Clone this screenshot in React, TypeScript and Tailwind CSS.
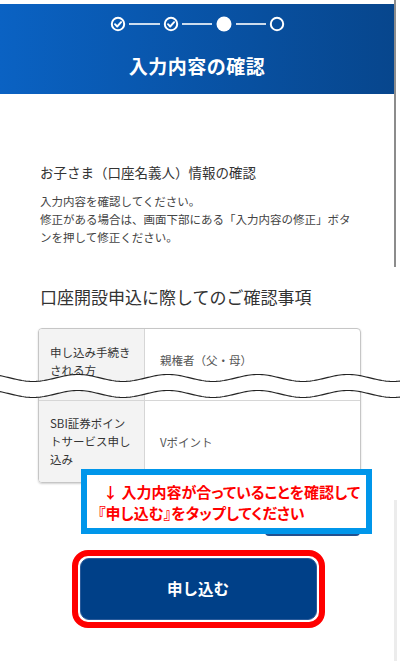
import React from "react"

const jp = "font-['Noto_Sans_CJK_JP','Noto_Sans',sans-serif]"

function CheckStep({ cx }: { cx: number }) {
  return (
    <g>
      <circle cx={cx} cy={10} r={6.2} fill="none" stroke="white" strokeWidth={2} />
      <path d={`M${cx - 3} ${10.2} l2.2 2.3 l3.9 -4.4`} fill="none" stroke="white" strokeWidth={1.9} strokeLinecap="round" strokeLinejoin="round" />
    </g>
  )
}

function Steps() {
  // centres of the four steps, 53px apart
  const xs = [8, 61, 114, 167]
  return (
    <svg width="175" height="20" viewBox="0 0 175 20">
      <CheckStep cx={xs[0]} />
      <CheckStep cx={xs[1]} />
      <circle cx={xs[2]} cy={10} r={7.5} fill="white" />
      <circle cx={xs[3]} cy={10} r={6.2} fill="none" stroke="white" strokeWidth={2} />
      <line x1={19} y1={10} x2={50} y2={10} stroke="white" strokeWidth={1.6} />
      <line x1={72} y1={10} x2={102} y2={10} stroke="white" strokeWidth={1.6} />
      <line x1={126} y1={10} x2={156} y2={10} stroke="white" strokeWidth={1.6} />
    </svg>
  )
}

function wave(c: number, width: number) {
  const pts: string[] = []
  for (let x = 0; x <= width; x += 2) {
    const y = c + 3.5 * Math.cos((2 * Math.PI * (x - 33)) / 90)
    pts.push(`${x},${y.toFixed(2)}`)
  }
  return pts
}

function WaveBreak() {
  const w = 400
  const top = wave(8, w)
  const bottom = wave(24, w).reverse()
  return (
    <svg className="absolute left-0 top-[42px]" width={w} height="34" viewBox={`0 0 ${w} 34`}>
      <polygon points={[...top, ...bottom].join(" ")} fill="white" />
      <polyline points={top.join(" ")} fill="none" stroke="#222" strokeWidth={1.1} />
      <polyline points={wave(24, w).join(" ")} fill="none" stroke="#222" strokeWidth={1.1} />
    </svg>
  )
}

export default function App() {
  return (
    <div className={`relative min-h-[661px] w-[400px] bg-white ${jp}`}>
      <div className="absolute left-[394px] top-0 h-[267px] w-[2px] bg-[#8c8c8c]" />
      <div className="absolute left-[394px] top-[500px] h-[161px] w-[3px] bg-[#ececec]" />

      <div className="w-[396px]">
        <div className="h-[4px] bg-white" />
        <header className="flex h-[90px] w-[395px] flex-col items-center border-r border-[#1a2a44] bg-linear-to-r from-[#0a62c3] to-[#07468d]">
          <div className="mt-[10px]">
            <Steps />
          </div>
          <h1 className="mt-[19px] text-[19px] font-bold leading-[26px] tracking-[0.5px] text-white">入力内容の確認</h1>
        </header>

        <div className="pl-[40px] pr-[35px]">
          <h2 className="mt-[68px] text-[13.5px] leading-[20px] text-[#333]">お子さま（口座名義人）情報の確認</h2>
          <p className="mt-[10px] text-[11.5px] leading-[18px] text-[#444]">
            入力内容を確認してください。
            <br />
            修正がある場合は、画面下部にある「入力内容の修正」ボタ
            <br />
            ンを押して修正ください。
          </p>
          <h2 className="mt-[39px] text-[17px] leading-[24px] text-[#333]">口座開設申込に際してのご確認事項</h2>
        </div>

        <div className="relative mt-[19px]">
          <div className="ml-[38px] w-[323px] overflow-hidden rounded-[4px] border border-[#c6c6c6] text-[11.5px] leading-[18px] shadow-[0_1px_2px_rgba(0,0,0,0.18)]">
            <div className="grid h-[71px] grid-cols-[106px_1fr]">
              <div className="border-r border-[#d6d6d6] bg-[#f3f3f3] pl-[11px] pr-[10px] pt-[14px] text-[#333]">申し込み手続きされる方</div>
              <div className="pl-[15px] pt-[22px] text-[#555]">親権者（父・母）</div>
            </div>
            <div className="grid grid-cols-[106px_1fr] border-t border-[#d6d6d6]">
              <div className="border-r border-[#d6d6d6] bg-[#f3f3f3] pb-[14px] pl-[11px] pr-[10px] pt-[13px] text-[#333]">SBI証券ポイントサービス申し込み</div>
              <div className="flex items-center pl-[15px] text-[#555]">Vポイント</div>
            </div>
          </div>
          <WaveBreak />
        </div>

        <div className="relative pt-[17px]">
          <div className="ml-[265px] h-[36px] w-[95px] rounded-[4px] bg-[#22508f]" />
          <div className="absolute left-[81px] top-[-14px] h-[65px] w-[291px] border-[6px] border-[#0096ea] bg-white pl-[11px] pt-[6px] text-[15px] font-bold leading-[21px] text-[#f00] [font-feature-settings:'palt']">
            <div className="pl-[5px]">↓ 入力内容が合っていることを確認して</div>
            <div>『申し込む』をタップしてください</div>
          </div>
        </div>

        <div className="mt-[14px] flex justify-center">
          <div className="h-[78px] w-[253px] rounded-[16px] border-[6px] border-[#f00] bg-white p-[2px]">
            <button className="flex h-full w-full items-center justify-center rounded-[9px] border border-[#2a5a9a] bg-[#004088] text-[15.5px] font-bold text-white">
              申し込む
            </button>
          </div>
        </div>
      </div>
    </div>
  )
}
